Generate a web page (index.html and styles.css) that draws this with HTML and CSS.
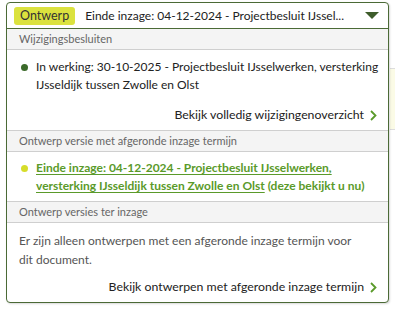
FILE: index.html
```html
<!DOCTYPE html>
<html lang="nl">
<head>
<meta charset="utf-8">
<link rel="stylesheet" href="styles.css">
</head>
<body>
<div class="page">
  <div class="bg-right"></div>
  <div class="dropdown">
    <div class="head">
      <span class="badge">Ontwerp</span>
      <span class="head-title">Einde inzage: 04-12-2024 - Projectbesluit IJssel...</span>
      <svg class="caret" width="14" height="8" viewBox="0 0 14 8"><path d="M0 0 H14 L7 7 Z" fill="#3e5d2b"/></svg>
    </div>
    <div class="panel">
      <div class="sec-title">Wijzigingsbesluiten</div>
      <div class="item item-first">
        <span class="dot dot-green"></span>
        <span class="item-text">In werking: 30-10-2025 - Projectbesluit IJsselwerken, versterking<br>IJsseldijk tussen Zwolle en Olst</span>
      </div>
      <div class="more"><span>Bekijk volledig wijzigingenoverzicht</span><svg class="chev" width="7" height="11" viewBox="0 0 7 11"><path d="M1 1 L5.5 5.5 L1 10" fill="none" stroke="#5a9a2a" stroke-width="1.8"/></svg></div>
      <div class="sec-title">Ontwerp versie met afgeronde inzage termijn</div>
      <div class="item item-current">
        <span class="dot dot-yellow"></span>
        <span class="item-text"><a class="cur-link">Einde inzage: 04-12-2024 - Projectbesluit IJsselwerken, versterking IJsseldijk tussen Zwolle en Olst</a> (deze bekijkt u nu)</span>
      </div>
      <div class="sec-title">Ontwerp versies ter inzage</div>
      <p class="note">Er zijn alleen ontwerpen met een afgeronde inzage termijn voor dit document.</p>
      <div class="more more-last"><span>Bekijk ontwerpen met afgeronde inzage termijn</span><svg class="chev" width="7" height="11" viewBox="0 0 7 11"><path d="M1 1 L5.5 5.5 L1 10" fill="none" stroke="#5a9a2a" stroke-width="1.8"/></svg></div>
    </div>
  </div>
</div>
</body>
</html>
```
FILE: styles.css
```css
* { box-sizing: border-box; }
html, body { margin: 0; padding: 0; background: #fff; }
body {
  font-family: "Lato", "Noto Sans", sans-serif;
  font-size: 12px;
  color: #222;
  width: 395px;
  height: 310px;
  overflow: hidden;
}
.page {
  position: relative;
  padding: 2px 6px 0 6px;
}
.bg-right {
  position: absolute;
  left: 390px;
  top: 68px;
  width: 10px;
  height: 62px;
  background: #fbfbe6;
  border-top: 1px solid #ddd;
  border-bottom: 1px solid #ddd;
}
.dropdown {
  position: relative;
  width: 383px;
  border: 1px solid #4b6a36;
  border-radius: 4px;
  background: #fff;
  box-shadow: 1px 1px 2px rgba(0,0,0,0.15);
}
.head {
  display: flex;
  align-items: center;
  height: 26px;
  padding: 0 9px 0 7px;
  border-bottom: 1px solid #4b6a36;
}
.badge {
  background: #dbe23e;
  color: #333;
  border-radius: 3px;
  padding: 0 6px;
  height: 18px;
  line-height: 18px;
  font-size: 12.5px;
}
.head-title {
  margin-left: 10px;
  flex: 1;
  white-space: nowrap;
  color: #222;
  font-size: 12px;
}
.sec-title {
  background: #f4f4f4;
  color: #666;
  font-size: 11px;
  height: 21px;
  line-height: 20px;
  padding-left: 12px;
  border-bottom: 1px solid #cfcfcf;
}
.item {
  display: flex;
  align-items: flex-start;
  padding: 8px 10px 6px 14px;
  line-height: 18px;
}
.item-first {
  padding-right: 0;
  font-size: 12px;
}
.item-first .item-text {
  white-space: nowrap;
}
.item-current {
  border-bottom: 1px solid #cfcfcf;
  padding-top: 7px;
  padding-bottom: 6px;
}
.dot {
  flex: none;
  width: 7px;
  height: 7px;
  border-radius: 50%;
  margin-top: 6px;
  margin-right: 8px;
}
.dot-green { background: #3b6a2a; }
.dot-yellow { background: #d6dd2a; }
.item-current .item-text {
  color: #5a9a2a;
  font-weight: bold;
}
.cur-link {
  text-decoration: underline;
  text-underline-offset: 2px;
}
.more {
  display: flex;
  justify-content: flex-end;
  align-items: center;
  gap: 6px;
  padding: 6px 11px 6px 0;
  border-bottom: 1px solid #cfcfcf;
  line-height: 18px;
  font-size: 12.3px;
}
.more-last {
  border-bottom: none;
  padding-top: 9px;
  padding-bottom: 6px;
}
.note {
  margin: 0;
  padding: 8px 30px 0 12px;
  color: #555;
  line-height: 19px;
}
```
